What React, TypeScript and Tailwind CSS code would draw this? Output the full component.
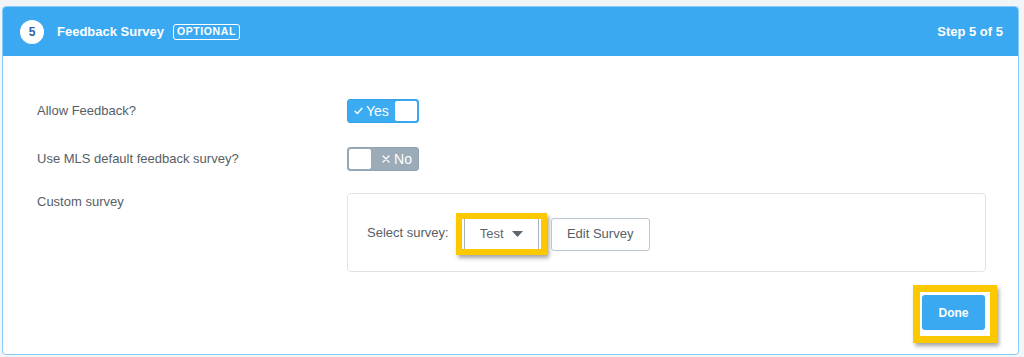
import React from "react";

function Toggle({ on }: { on: boolean }) {
  if (on) {
    return (
      <div className="flex h-[24px] w-[72px] items-center justify-between rounded-[3px] border border-[#35a2ea] bg-[#3babf2] pl-[6px] pr-[1px]">
        <span className="flex items-center gap-[3px] text-[14px] text-white">
          <svg width="9" height="8" viewBox="0 0 9 8" fill="none">
            <path d="M1 4.2L3.4 6.5L8 1.2" stroke="white" strokeWidth="1.4" strokeLinecap="round" strokeLinejoin="round" />
          </svg>
          Yes
        </span>
        <span className="h-[20px] w-[22px] rounded-[2px] bg-white" />
      </div>
    );
  }
  return (
    <div className="flex h-[24px] w-[72px] items-center rounded-[3px] border border-[#93a4b1] bg-[#9babb8] pl-[1px] pr-[6px]">
      <span className="h-[20px] w-[22px] rounded-[2px] bg-white" />
      <span className="ml-auto flex items-center gap-[4px] text-[14px] text-white">
        <svg width="8" height="8" viewBox="0 0 8 8" fill="none">
          <path d="M1 1L7 7M7 1L1 7" stroke="white" strokeWidth="1.3" strokeLinecap="round" />
        </svg>
        No
      </span>
    </div>
  );
}

export default function App() {
  return (
    <div className="h-[357px] w-[1024px] bg-[#f2f5f7] pl-[2px] pt-[6px] font-['Liberation_Sans',Arial,sans-serif]">
      <div className="flex h-[349px] w-[1017px] flex-col overflow-hidden rounded-[4px] border border-[#8bcbf7] bg-white">
        {/* header */}
        <div className="flex h-[49px] shrink-0 items-center bg-[#3aa9f1] pl-[17px] pr-[15px] text-white">
          <div className="flex h-[24px] w-[24px] items-center justify-center rounded-full bg-white text-[12px] font-bold text-[#2d62aa]">
            5
          </div>
          <span className="ml-[13px] text-[13px] font-bold">Feedback Survey</span>
          <span className="ml-[9px] flex h-[16px] items-center rounded-[3px] border border-white px-[3px] text-[10.5px] font-bold tracking-[0.6px]">
            OPTIONAL
          </span>
          <span className="ml-auto text-[13px] font-bold">Step 5 of 5</span>
        </div>

        {/* body */}
        <div className="flex flex-col pl-[34px] pr-[32px] pt-[43px] text-[13px] text-[#565e66]">
          <div className="flex h-[24px] items-center">
            <div className="w-[310px]">Allow Feedback?</div>
            <Toggle on />
          </div>
          <div className="mt-[24px] flex h-[24px] items-center">
            <div className="w-[310px]">Use MLS default feedback survey?</div>
            <Toggle on={false} />
          </div>
          <div className="mt-[22px] flex items-start">
            <div className="w-[310px] pt-[1px] leading-[16px]">Custom survey</div>
            <div className="flex h-[79px] flex-1 items-center rounded-[4px] border border-[#dfe4e8] pl-[19px]">
              <span>Select survey:</span>
              <div className="ml-[7px] mt-[2px] flex h-[42px] w-[91px] items-center border-[6px] border-[#fcc800] shadow-[2px_3px_4px_rgba(0,0,0,0.35)]">
                <div className="ml-[2px] flex h-full w-[75px] items-center justify-center gap-[8px] border-x border-[#a9b3ba] text-[#5f666d]">
                  <span>Test</span>
                  <svg width="11" height="6" viewBox="0 0 11 6">
                    <path d="M0 0H11L5.5 6Z" fill="#5f666d" />
                  </svg>
                </div>
              </div>
              <button className="ml-[4px] mt-[3px] flex h-[33px] w-[99px] items-center justify-center rounded-[3px] border-[1.5px] border-[#b9c5cf] bg-white text-[13px] text-[#565e66]">
                Edit Survey
              </button>
            </div>
          </div>
          <div className="mt-[13px] flex justify-end">
            <div className="-mr-[11px] h-[58px] w-[84px] border-[7px] border-[#fcc800] pl-[2px] pt-[3px] shadow-[2px_3px_4px_rgba(0,0,0,0.35)]">
              <button className="flex h-[35px] w-[63px] items-center justify-center rounded-[3px] bg-[#3aa9f1] text-[12px] font-bold text-white">
                Done
              </button>
            </div>
          </div>
        </div>
      </div>
    </div>
  );
}
